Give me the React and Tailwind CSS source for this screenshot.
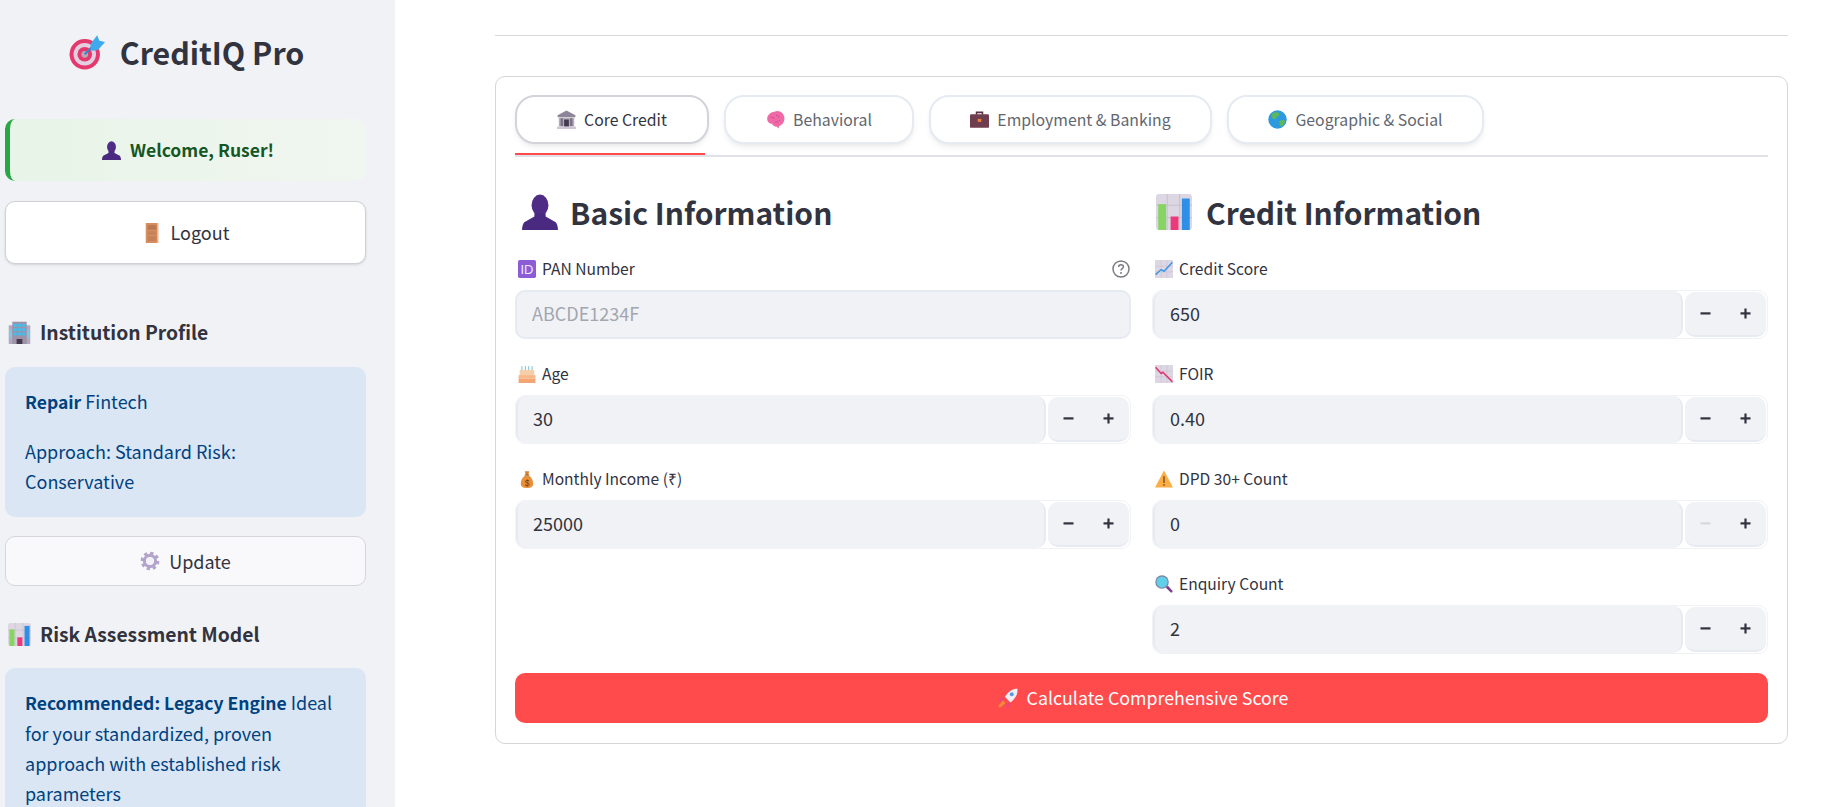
import React from "react";

// Emoji are drawn by hand, there is no emoji font on the page
const Emoji = ({ name, size = 18, className = "" }) => {
  const icons = {
    target: (
      <>
        <circle cx="14" cy="18" r="13.5" fill="#e5386d" />
        <circle cx="14" cy="18" r="10" fill="#e3cfe0" />
        <circle cx="14" cy="18" r="6.5" fill="#e5386d" />
        <circle cx="14" cy="18" r="3" fill="#b9a8b8" />
        <path d="M14 18L24 8" stroke="#3a86c8" strokeWidth="2" />
        <path d="M19 9l6-8 2 5 5 1-6 7-6 1z" fill="#3fa9ee" />
      </>
    ),
    bust: (
      <>
        <ellipse cx="16" cy="10" rx="7.5" ry="9.5" fill="#4f2d87" />
        <path d="M11 17h10v3l9 5c1 1 2 4 2 7H0c0-3 1-6 2-7l9-5z" fill="#4a2a80" />
      </>
    ),
    door: (
      <>
        <rect x="6" y="0" width="20" height="32" fill="#d98e5f" />
        <rect x="9" y="3" width="14" height="8" fill="#b97a52" />
        <rect x="9" y="13" width="14" height="6" fill="#c58259" />
        <rect x="9" y="21" width="14" height="8" fill="#c58259" />
        <rect x="24" y="0" width="2" height="32" fill="#eeb38a" />
      </>
    ),
    building: (
      <>
        <rect x="1" y="6" width="30" height="26" fill="#b3a9bd" />
        <rect x="6" y="1" width="20" height="31" fill="#9c93a8" />
        {[4, 10, 16].map((y) =>
          [8, 14, 20].map((x) => (
            <rect key={`${x}-${y}`} x={x} y={y} width="4" height="4" fill="#3fc0f0" />
          ))
        )}
        <rect x="12" y="25" width="8" height="7" fill="#433b4d" />
        <rect x="2" y="12" width="3" height="12" fill="#7fc8e8" />
        <rect x="27" y="12" width="3" height="12" fill="#7fc8e8" />
      </>
    ),
    bars: (
      <>
        <rect x="0" y="0" width="32" height="32" rx="3" fill="#ddd6e3" />
        <path d="M0 10h32M0 21h32M10 0v32M21 0v32" stroke="#c6bdce" strokeWidth="0.8" />
        <rect x="2" y="9" width="7" height="23" fill="#86d562" />
        <rect x="13" y="20" width="7" height="12" fill="#ea3a7c" />
        <rect x="23" y="4" width="7" height="28" fill="#2d8fe5" />
      </>
    ),
    gear: (
      <>
        <circle cx="16" cy="16" r="12" fill="none" stroke="#b3a4cc" strokeWidth="6" strokeDasharray="5 4.4" />
        <circle cx="16" cy="16" r="9" fill="none" stroke="#b3a4cc" strokeWidth="5" />
        <circle cx="16" cy="16" r="5.5" fill="#f3f1f6" />
      </>
    ),
    bank: (
      <>
        <path d="M16 1L31 9v3H1V9z" fill="#8f8599" />
        <rect x="3" y="13" width="26" height="15" fill="#b5abbd" />
        <rect x="6" y="14" width="4" height="13" fill="#7a7084" />
        <rect x="22" y="14" width="4" height="13" fill="#7a7084" />
        <rect x="12" y="16" width="8" height="12" fill="#433b4d" />
        <rect x="0" y="28" width="32" height="4" fill="#cfc7d6" />
      </>
    ),
    brain: (
      <>
        <path d="M14 3c8-4 17 2 17 11 0 7-4 12-9 13l-1 4-3-3c-4 0-6-2-8-5-4 0-8-3-8-8 0-6 5-11 12-12z" fill="#f06aa8" />
        <path d="M8 13c3-2 5 0 6 2M17 9c3 0 5 2 5 4M15 20c3 1 6 0 8-3" stroke="#d04a90" strokeWidth="1.6" fill="none" />
      </>
    ),
    briefcase: (
      <>
        <path d="M11 8V4h10v4" fill="none" stroke="#5a3140" strokeWidth="2.6" />
        <rect x="0" y="7" width="32" height="23" rx="2" fill="#6f3e4e" />
        <rect x="13" y="15" width="6" height="5" fill="#e8823c" />
      </>
    ),
    globe: (
      <>
        <circle cx="16" cy="16" r="15.5" fill="#2d9ae0" />
        <path d="M8 5c5-2 10-1 11 2 0 4-4 3-5 6-1 4-5 3-7 0-2-2-1-6 1-8zM20 18c4-2 8-1 9 1-1 5-4 8-7 9-2-2-4-7-2-10z" fill="#5cb85c" />
      </>
    ),
    id: (
      <>
        <rect x="0" y="0" width="32" height="32" rx="3" fill="#8b5cd6" />
        <text x="16" y="24" textAnchor="middle" fontSize="23" fill="#efe9fb" fontFamily="Liberation Sans, sans-serif">
          ID
        </text>
      </>
    ),
    up: (
      <>
        <rect x="0" y="0" width="32" height="32" fill="#ddd6e3" />
        <path d="M0 11h32M0 21h32M11 0v32M21 0v32" stroke="#c6bdce" strokeWidth="0.8" />
        <path d="M1 26l10-9 5 3L31 4" fill="none" stroke="#3a96e8" strokeWidth="2.6" />
      </>
    ),
    down: (
      <>
        <rect x="0" y="0" width="32" height="32" fill="#ddd6e3" />
        <path d="M0 11h32M0 21h32M11 0v32M21 0v32" stroke="#c6bdce" strokeWidth="0.8" />
        <path d="M1 4l10 11 3-2 17 17" fill="none" stroke="#e0356f" strokeWidth="2.6" />
      </>
    ),
    cake: (
      <>
        <path d="M7 2v8M13 2v8M19 2v8M25 2v8" stroke="#6fb7c9" strokeWidth="1.6" />
        <rect x="3" y="9" width="26" height="10" fill="#f4cfa8" />
        <rect x="1" y="18" width="30" height="6" fill="#f7b98b" />
        <rect x="1" y="24" width="30" height="8" fill="#f3a672" />
      </>
    ),
    bag: (
      <>
        <path d="M12 2h8l-2 7h-4z" fill="#d8832c" />
        <rect x="12" y="8" width="8" height="2" fill="#8a4f1f" />
        <path d="M12 10h8c5 4 7 9 7 14 0 6-4 8-11 8S5 30 5 24c0-5 2-10 7-14z" fill="#e8913a" />
        <text x="16" y="28" textAnchor="middle" fontSize="15" fill="#6b3d17" fontFamily="Liberation Sans, sans-serif">
          $
        </text>
      </>
    ),
    warn: (
      <>
        <path d="M16 1L32 31H0z" fill="#fcae45" />
        <rect x="14.8" y="11" width="2.4" height="12" fill="#6b4a2a" />
        <rect x="14.8" y="25" width="2.4" height="3" fill="#6b4a2a" />
      </>
    ),
    search: (
      <>
        <path d="M19 22l4-3 8 9c1 2-1 4-3 3z" fill="#7b3f8c" />
        <circle cx="12.5" cy="12.5" r="12" fill="#7a7fa0" />
        <circle cx="12.5" cy="12.5" r="10" fill="#62cfe8" />
      </>
    ),
    rocket: (
      <>
        <path d="M31 1c1 9-3 15-11 22l-9-9C17 5 23 1 31 1z" fill="#f1eef5" />
        <circle cx="22" cy="10" r="3.2" fill="#5a9be8" />
        <path d="M11 14l-7 2-3 5 7-1zM20 23l-2 7-5 2 1-7z" fill="#e8467c" />
        <path d="M8 20l4 4-8 7-3 0 0-3z" fill="#f2893c" />
      </>
    ),
  };
  return (
    <svg width={size} height={size} viewBox="0 0 32 32" className={`shrink-0 ${className}`}>
      {icons[name]}
    </svg>
  );
};

const SideButton = ({ icon, label, className }) => (
  <div className={`flex items-center justify-center gap-[9px] rounded-[10px] border text-[18px] text-[#31333f] ${className}`}>
    <Emoji name={icon} size={20} />
    <span>{label}</span>
  </div>
);

const SideHeading = ({ icon, label, className }) => (
  <div className={`flex h-[32px] items-center gap-[9px] pl-[3px] text-[19.3px] leading-[32px] font-semibold text-[#31333f] ${className}`}>
    <Emoji name={icon} size={23} />
    <span>{label}</span>
  </div>
);

const FieldLabel = ({ icon, label, help }) => (
  <div className="mb-[9px] flex h-[25px] items-center gap-[6px] pl-[3px] text-[15.6px] text-[#31333f]">
    <Emoji name={icon} size={18} />
    <span>{label}</span>
    {help && (
      <svg width="18" height="18" viewBox="0 0 18 18" className="mr-[1px] ml-auto">
        <circle cx="9" cy="9" r="8" fill="none" stroke="#7b7c84" strokeWidth="1.5" />
        <path d="M6.6 7c0-1.5 1.1-2.3 2.4-2.3s2.4.8 2.4 2.1c0 1.9-2.4 1.9-2.4 3.7" fill="none" stroke="#7b7c84" strokeWidth="1.5" />
        <circle cx="9" cy="13" r="1" fill="#7b7c84" />
      </svg>
    )}
  </div>
);

const TextField = ({ icon, label, placeholder }) => (
  <div>
    <FieldLabel icon={icon} label={label} help />
    <div className="flex h-[49px] items-center rounded-[10px] border-2 border-[#e6eaf1] bg-[#f0f2f6] pb-[2px] pl-[15px] text-[18px] text-[#a3a6af]">
      {placeholder}
    </div>
  </div>
);

const StepButton = ({ disabled, plus }) => (
  <svg width="11" height="11" viewBox="0 0 11 11" className="block">
    <rect x="0.5" y="4.3" width="10" height="2.2" fill={disabled ? "#d5d8de" : "#31333f"} />
    {plus && <rect x="4.4" y="0.5" width="2.2" height="10" fill="#31333f" />}
  </svg>
);

const NumberField = ({ icon, label, value, minDisabled }) => (
  <div>
    <FieldLabel icon={icon} label={label} />
    <div className="flex h-[49px] items-stretch rounded-[10px] border border-[#f0f2f6]">
      <div className="flex flex-1 items-center rounded-[10px] border-2 border-y-0 border-r-2 border-[#e6eaf1] bg-[#f0f2f6] pb-[2px] pl-[15px] text-[18px] text-[#31333f]">
        {value}
      </div>
      <div className="my-[1px] mr-[1px] ml-[2px] flex w-[81px] items-center justify-between rounded-[10px] border-b-2 border-[#e6eaf1] bg-[#f0f2f6] px-[15px]">
        <StepButton disabled={minDisabled} />
        <StepButton plus />
      </div>
    </div>
  </div>
);

const tabs = [
  { icon: "bank", label: "Core Credit", width: "w-[194px]", active: true },
  { icon: "brain", label: "Behavioral", width: "w-[190px]" },
  { icon: "briefcase", label: "Employment & Banking", width: "w-[283px]" },
  { icon: "globe", label: "Geographic & Social", width: "w-[257px]" },
];

export default function App() {
  return (
    <div className="flex h-screen overflow-hidden bg-white font-['Noto_Sans_CJK_SC','Source_Sans_Pro',sans-serif] text-[#31333f]">
      {/* Sidebar */}
      <aside className="w-[395px] shrink-0 overflow-hidden bg-[#f0f2f6] pr-[29px] pl-[5px]">
        <div className="mt-[34px] flex h-[36px] items-center justify-center gap-[15px] pl-[2px] text-[30.4px] leading-[36px] font-semibold">
          <Emoji name="target" size={36} />
          <span>CreditIQ Pro</span>
        </div>

        <div className="mt-[49px] flex h-[62px] items-center justify-center gap-[9px] rounded-[10px] border-l-[5px] border-[#28a745] bg-gradient-to-r from-[#e8f4e8] to-[#f0f6f0] text-[17.5px] font-semibold text-[#155724]">
          <Emoji name="bust" size={19} />
          <span>Welcome, Ruser!</span>
        </div>

        <SideButton icon="door" label="Logout" className="mt-[20px] h-[63px] border-[#d0d1d6] bg-white shadow-sm" />

        <SideHeading icon="building" label="Institution Profile" className="mt-[52px]" />

        <div className="mt-[19px] h-[150px] rounded-[10px] bg-[#dae6f4] px-[20px] pt-[19px] text-[18px] leading-[30px] text-[#004280]">
          <p>
            <strong className="text-[17.5px] font-semibold">Repair</strong> Fintech
          </p>
          <p className="mt-[19px]">Approach: Standard Risk: Conservative</p>
        </div>

        <SideButton icon="gear" label="Update" className="mt-[19px] h-[50px] border-[#d5d6da] bg-[#f9f9fb]" />

        <SideHeading icon="bars" label="Risk Assessment Model" className="mt-[32px]" />

        <div className="mt-[18px] rounded-[10px] bg-[#dae6f4] px-[20px] pt-[19px] pb-[20px] text-[18px] leading-[30px] text-[#004280]">
          <strong className="text-[17.5px] font-semibold">Recommended: Legacy Engine</strong> Ideal for your standardized, proven approach with established risk parameters
        </div>
      </aside>

      {/* Main */}
      <main className="flex-1 pt-[35px] pr-[42px] pl-[100px]">
        <div className="h-px bg-[#d8d9dd]" />

        <section className="mt-[40px] h-[668px] rounded-[10px] border border-[#d5d6da] px-[19px] pt-[18px]">
          <div className="flex h-[62px] items-start gap-[15px] border-b-2 border-[#e0e2e7]">
            {tabs.map((t) => (
              <div key={t.label} className="relative h-[60px]">
                <div
                  className={`flex h-[49px] items-center justify-center gap-[8px] rounded-[20px] border-2 bg-white text-[15.8px] shadow-md shadow-[#00000010] ${t.width} ${
                    t.active ? "border-[#d2d4da] text-[#31333f]" : "border-[#e6eaf1] text-[#62666f]"
                  }`}
                >
                  <Emoji name={t.icon} size={19} />
                  <span>{t.label}</span>
                </div>
                {t.active && <div className="absolute right-[4px] bottom-0 left-0 h-[2px] bg-[#ff4b4b]" />}
              </div>
            ))}
          </div>

          <div className="mt-[33px] grid grid-cols-2 gap-x-[21px]">
            <div>
              <h2 className="flex h-[44px] items-center gap-[12px] pl-[7px] text-[30px] leading-[44px] font-semibold">
                <Emoji name="bust" size={36} />
                <span>Basic Information</span>
              </h2>
              <div className="mt-[22px] flex flex-col gap-[22px]">
                <TextField icon="id" label="PAN Number" placeholder="ABCDE1234F" />
                <NumberField icon="cake" label="Age" value="30" />
                <NumberField icon="bag" label="Monthly Income (₹)" value="25000" />
              </div>
            </div>
            <div>
              <h2 className="flex h-[44px] items-center gap-[14px] pl-[4px] text-[30px] leading-[44px] font-semibold">
                <Emoji name="bars" size={36} />
                <span>Credit Information</span>
              </h2>
              <div className="mt-[22px] flex flex-col gap-[22px]">
                <NumberField icon="up" label="Credit Score" value="650" />
                <NumberField icon="down" label="FOIR" value="0.40" />
                <NumberField icon="warn" label="DPD 30+ Count" value="0" minDisabled />
                <NumberField icon="search" label="Enquiry Count" value="2" />
              </div>
            </div>
          </div>

          <div className="mt-[19px] flex h-[50px] items-center justify-center gap-[9px] rounded-[10px] bg-[#ff4b4b] pb-[1px] pl-[3px] text-[17.8px] text-white">
            <Emoji name="rocket" size={20} />
            <span>Calculate Comprehensive Score</span>
          </div>
        </section>
      </main>
    </div>
  );
}
